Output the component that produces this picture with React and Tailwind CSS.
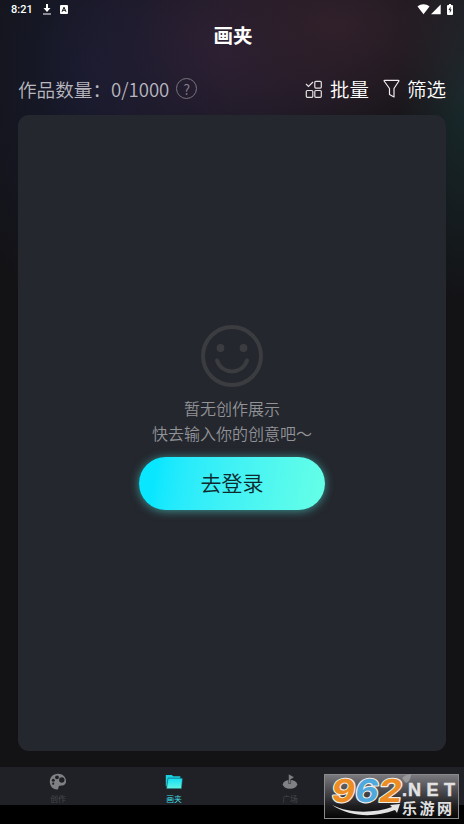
const TABS = [
  { label: "创作", icon: PaletteIcon },
  { label: "画夹", icon: FolderIcon, active: true },
  { label: "广场", icon: FlagIcon },
  { label: "", icon: LeafIcon },
];

export default function App() {
  return (
    <div className="relative flex h-[824px] w-[464px] flex-col overflow-hidden bg-[#131316] font-['Noto_Sans_CJK_SC','Noto_Sans',sans-serif] text-white">
      <Backdrop />

      <div className="relative flex flex-1 flex-col">
        <StatusBar />
        <h1 className="h-[32px] pl-[2px] text-center text-[19.5px] font-bold leading-[32px]">画夹</h1>

        {/* Toolbar */}
        <div className="mt-[23px] flex h-[30px] items-center justify-between pl-[18px] pr-[18px]">
          <div className="flex items-center text-[18.6px] font-[350] text-[#b8b7bf]">
            <span className="whitespace-nowrap">作品数量：0/1000</span>
            <span className="ml-[7px] flex h-[21px] w-[21px] items-center justify-center rounded-full border border-[#77767e] text-[14px] leading-none text-[#85848c]">
              ?
            </span>
          </div>
          <div className="flex items-center text-[19.5px] font-[350]">
            <BatchIcon />
            <span className="ml-[7px]">批量</span>
            <FilterIcon />
            <span className="ml-[7px]">筛选</span>
          </div>
        </div>

        {/* Empty gallery */}
        <section className="mx-[18px] mt-[11px] flex h-[636px] flex-col items-center rounded-[11px] bg-[#24272e] pt-[210px]">
          <SmileIcon />
          <div className="mt-[9px] text-center text-[16px] font-[350] leading-[24.5px] text-[#929397]">
            <p>暂无创作展示</p>
            <p>快去输入你的创意吧～</p>
          </div>
          <button className="mt-[12px] h-[53px] w-[186px] rounded-full bg-linear-100 from-[#08e7ff] from-10% to-[#65ffe6] pb-px text-[21px] font-[350] text-[#0c292d] shadow-[0_1px_10px_rgba(80,240,230,0.55)]">
            去登录
          </button>
        </section>
      </div>

      <nav className="relative flex h-[38px] bg-[#1f2126]">
        {TABS.map(({ label, icon: Icon, active }, i) => (
          <div key={i} className="flex flex-1 flex-col items-center pt-[6px]">
            <Icon />
            <span
              className={`mt-[2px] text-[7.8px] leading-[11px] ${
                active ? "text-[#3fdde5]" : "text-[#47484c]"
              }`}
            >
              {label}
            </span>
          </div>
        ))}
      </nav>
      <div className="h-[19px] bg-black" />

      <SiteBadge />
    </div>
  );
}

function Backdrop() {
  return (
    <div className="absolute inset-x-0 top-0 h-[330px] bg-[radial-gradient(ellipse_200px_120px_at_335px_25px,#30202a_0%,transparent_100%),radial-gradient(ellipse_190px_150px_at_225px_50px,#2a2038_0%,transparent_100%),radial-gradient(ellipse_150px_240px_at_90px_75px,#171a2e_0%,transparent_100%),radial-gradient(ellipse_70px_210px_at_464px_90px,#182a2c_0%,transparent_100%)]" />
  );
}

function StatusBar() {
  return (
    <div className="flex h-[19px] items-center justify-between pl-[11px] pr-[11px]">
      <div className="flex items-center">
        <span className="w-[32px] font-['Roboto',sans-serif] text-[11px] font-medium leading-none">8:21</span>
        <svg width="8" height="11" viewBox="0 0 8 11" fill="white">
          <path d="M3 0h2v4h2.5L4 8 .5 4H3z" />
          <path d="M0 9.5h8v1H0z" />
        </svg>
        <svg className="ml-[9px]" width="8" height="9" viewBox="0 0 8 9">
          <rect width="8" height="9" rx="1" fill="white" />
          <path d="M2 6.8 4 2.2l2 4.6M2.8 5.3h2.4" fill="none" stroke="#15151b" strokeWidth="1" />
        </svg>
      </div>
      <svg width="36" height="11" viewBox="0 0 36 11" fill="white">
        <path d="M.5 2.400C4-.5 9-.5 12.500 2.400L6.500 10.200z" />
        <path d="M14 10.200 23.700.500v9.700z" />
        <path d="M31 1h1V0h2v1h1q1 0 1 1v8q0 1-1 1h-4q-1 0-1-1V2q0-1 1-1z" />
        <path d="M33.600 2.600 31.500 6h1.300v3L34.700 5.500h-1.200z" fill="#1b2227" />
      </svg>
    </div>
  );
}

function BatchIcon() {
  return (
    <svg width="18" height="19" viewBox="0 0 18 19" fill="none" stroke="#e3e0e2" strokeWidth="1.2">
      <path d="m1 4 2.500 2.500L8 2" />
      <rect x="9.800" y="1.300" width="6.500" height="6.800" rx="1" />
      <rect x="1.300" y="10.500" width="6.500" height="6.800" rx="1" />
      <rect x="9.800" y="10.500" width="6.500" height="6.800" rx="1" />
    </svg>
  );
}

function FilterIcon() {
  return (
    <svg className="ml-[14px]" width="17" height="20" viewBox="0 0 17 20" fill="none" stroke="#eeecee" strokeWidth="1.2" strokeLinejoin="round">
      <path d="M1.500 1.300h14q.6 0 .4.700L11 9.500V18l-4.500-2.500v-6L1.100 2q-.2-.700.400-.700z" />
    </svg>
  );
}

function SmileIcon() {
  return (
    <svg width="62" height="62" viewBox="0 0 62 62" fill="none" stroke="#3b3c40" strokeWidth="4">
      <circle cx="31" cy="31" r="29" />
      <circle cx="19.5" cy="23" r="3.9" fill="#3b3c40" stroke="none" />
      <circle cx="42.5" cy="23" r="3.9" fill="#3b3c40" stroke="none" />
      <path d="M16 35.500c5 14.500 25 14.500 30 0" strokeLinecap="round" />
    </svg>
  );
}

function PaletteIcon() {
  return (
    <svg width="18" height="18" viewBox="0 0 18 18">
      <path d="M9 .7C4 .7.800 4.300.800 8.500c0 5 3.500 8 7.200 8 2 0 1-2.500 2-3.500s6 1 7-4C17.500 4 13.500.7 9 .7z" fill="#808184" />
      <g fill="#1f2126">
        <circle cx="4.3" cy="7.3" r="1.5" />
        <circle cx="8" cy="4.3" r="1.9" />
        <circle cx="12.8" cy="7" r="2.7" />
        <circle cx="4.2" cy="10.7" r="1.1" />
      </g>
    </svg>
  );
}

function FolderIcon() {
  return (
    <svg width="18" height="18" viewBox="0 0 18 18">
      <defs>
        <linearGradient id="folder" x1="0" y1="0" x2="0" y2="1">
          <stop offset="0" stopColor="#12dff5" />
          <stop offset="1" stopColor="#62f5e4" />
        </linearGradient>
      </defs>
      <path d="M.8 2h6l1.500 1.300h7v10H.8z" fill="#18d0e0" />
      <path d="M3 5.200h14.500l-1 10.500H1.500z" fill="url(#folder)" stroke="#1f4a52" strokeWidth=".6" />
    </svg>
  );
}

function FlagIcon() {
  return (
    <svg width="18" height="18" viewBox="0 0 18 18" fill="#808184">
      <ellipse cx="9" cy="11.3" rx="7.2" ry="4.4" />
      <path d="M7.600 10.500V1l5.700 3.200-3.700 2.300v4z" stroke="#1f2126" strokeWidth=".5" />
    </svg>
  );
}

function LeafIcon() {
  return (
    <svg width="18" height="18" viewBox="0 0 18 18" fill="#808184">
      <path d="M6 4q3-3 8-3-1 7-5 9l-4-2z" />
    </svg>
  );
}

function SiteBadge() {
  return (
    <svg className="absolute left-[324px] top-[774px]" width="135" height="45" viewBox="0 0 135 45">
      <defs>
        <linearGradient id="badge" x1="0" y1="0" x2="0" y2="1">
          <stop offset="0" stopColor="#858489" stopOpacity=".9" />
          <stop offset=".68" stopColor="#242427" stopOpacity=".9" />
          <stop offset="1" stopColor="#050505" />
        </linearGradient>
      </defs>
      <rect x=".5" y=".5" width="134" height="44" fill="url(#badge)" stroke="#8a8a8a" />
      <path d="M78 4q3-3 9-4 0 7-5 9z" fill="#a5a5a8" opacity=".7" />
      <g
        className="font-['Inter',sans-serif] font-bold"
        fontSize="31.5"
        stroke="#f3eee5"
        strokeWidth="2.2"
        strokeLinejoin="round"
        transform="skewX(-9)"
        style={{ paintOrder: "stroke" }}
      >
        <text x="10.5" y="27.500" textLength="23.5" lengthAdjust="spacingAndGlyphs" fill="#ed8c22">9</text>
        <text x="34" y="27.500" textLength="23.500" lengthAdjust="spacingAndGlyphs" fill="#4fa9df">6</text>
        <text x="57.5" y="27.500" textLength="23.5" lengthAdjust="spacingAndGlyphs" fill="#ed8c22">2</text>
      </g>
      <path d="M8 31c18 9 43 8 60 2l-2-2 10-1-3 9-2-3C50 44 26 43 8 31z" fill="#e4e4e4" />
      <g className="font-['Liberation_Sans',sans-serif] font-bold" fontSize="18" fill="#e2e2e2" stroke="#e2e2e2" strokeWidth=".5">
        <text x="78" y="22">.</text>
        <text x="84" y="22" textLength="47">NET</text>
      </g>
      <text x="78" y="40" className="font-bold" fontSize="15" textLength="50" fill="#e2e2e2">乐游网</text>
    </svg>
  );
}
